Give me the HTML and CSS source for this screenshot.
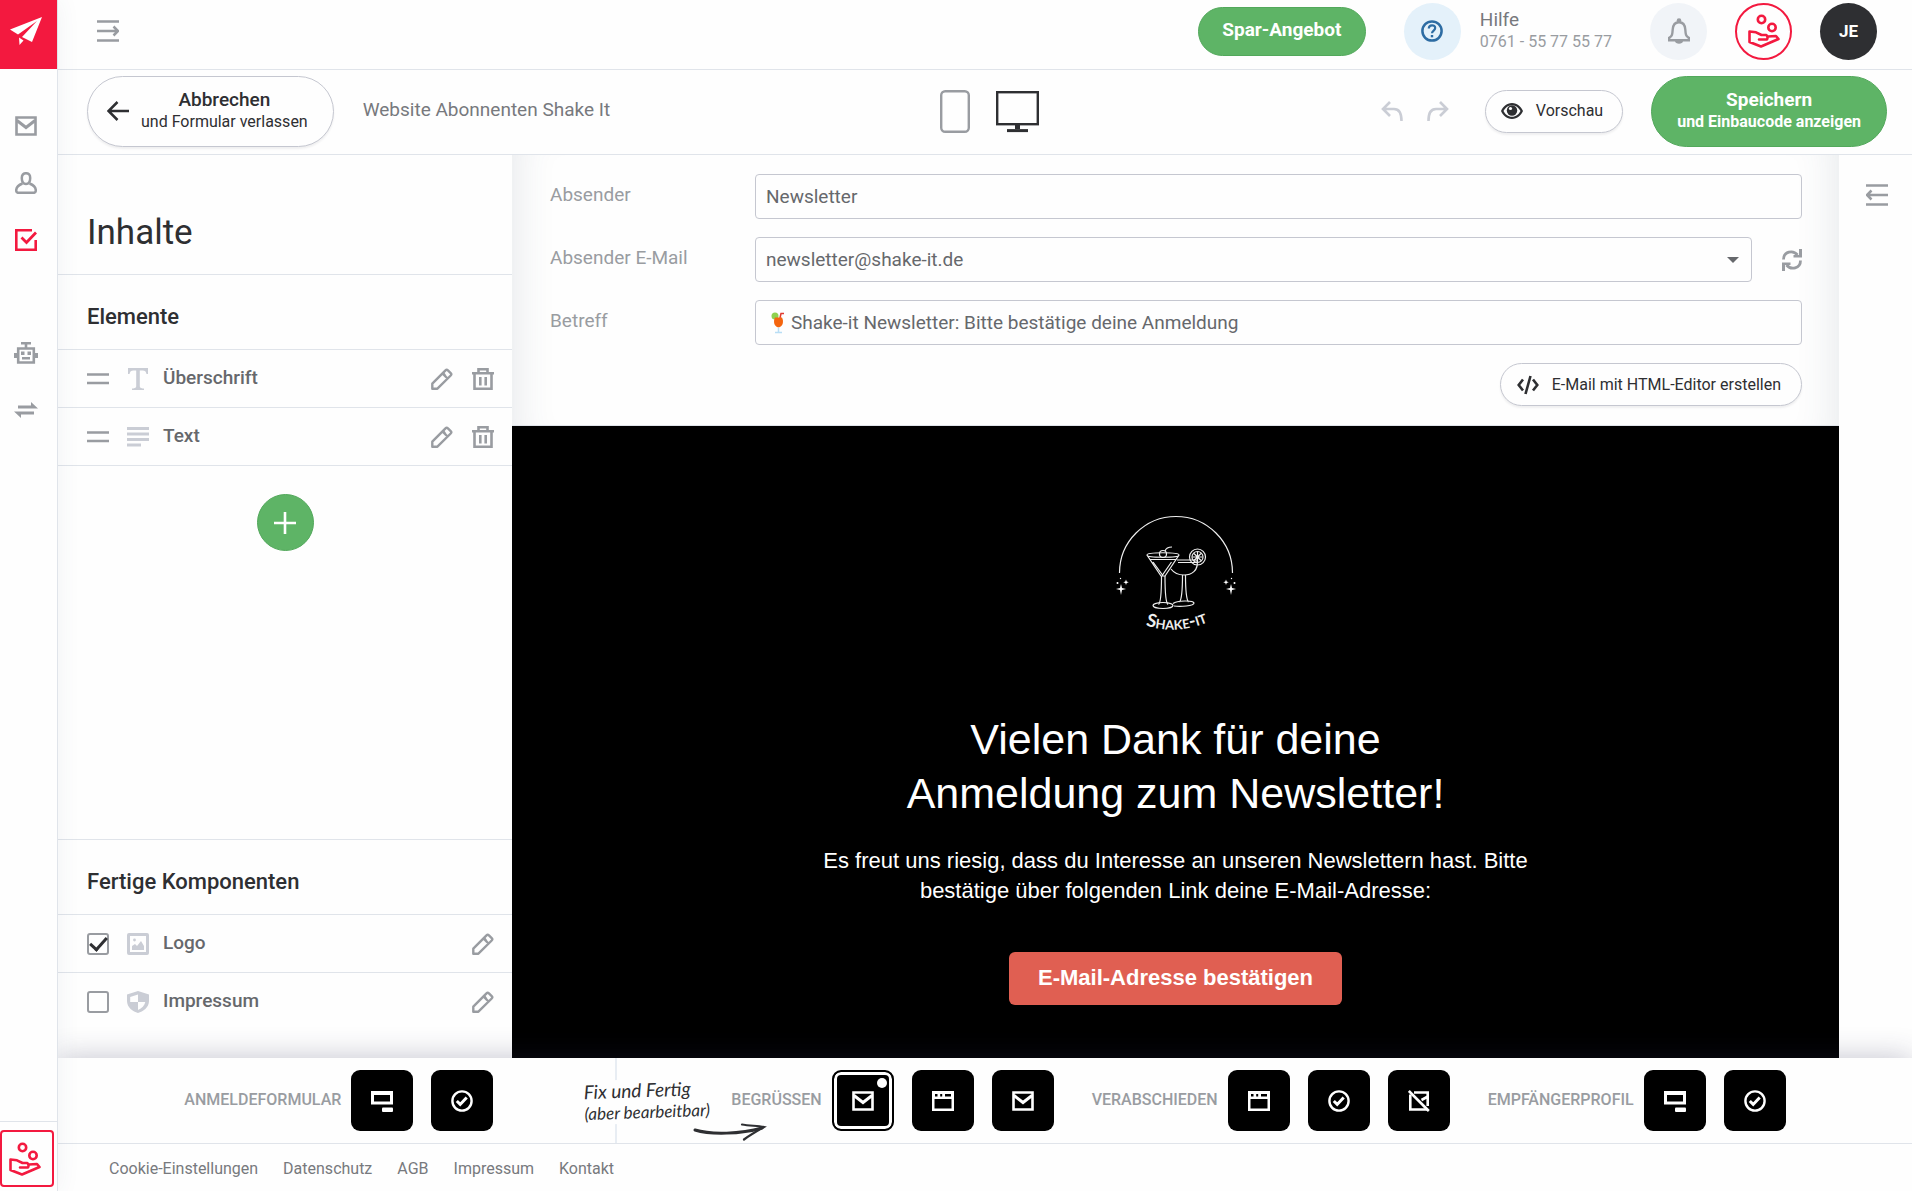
FILE: index.html
```html
<!DOCTYPE html>
<html lang="de">
<head>
<meta charset="utf-8">
<meta name="viewport" content="width=device-width, initial-scale=1">
<title>Website Abonnenten Shake It</title>
<link rel="stylesheet" href="styles.css">
</head>
<body>
<svg class="sprite" aria-hidden="true">
  <symbol id="i-mail" viewBox="0 0 22 20"><path d="M1.500 1.500h19v17h-19z" fill="none" stroke="currentColor" stroke-width="2.600"/><path d="M2 4.500l9 7 9-7" fill="none" stroke="currentColor" stroke-width="3"/></symbol>
  <symbol id="i-hand" viewBox="0 0 32 34"><g fill="none" stroke="currentColor" stroke-width="2.600" stroke-linejoin="round" stroke-linecap="round"><circle cx="13.500" cy="5.500" r="3.700"/><circle cx="24" cy="13.500" r="3.700"/><path d="M1.500 17.500v10.500l11.500 4.500 17.500-7.500-2.500-3-8 .5M1.500 17.500l6.500.8 5.500 2.700h4.500c1.500.5 2 2.500 1 4.500h-8"/></g></symbol>
  <symbol id="i-pencil" viewBox="0 0 22 22"><path d="M1.300 20.700v-5L14.500 2.300c.8-.8 1.600-.8 2.400 0l2.800 2.800c.8.800.8 1.600 0 2.400L6.400 20.700zM11.500 5.500l5 5M14.500 8.500l-2-3" fill="none" stroke="currentColor" stroke-width="2.400" stroke-linejoin="round"/></symbol>
  <symbol id="i-trash" viewBox="0 0 22 22"><path d="M0 5.200h22M6.500 5V1.300h9V5M2.500 5.500v15.200h17V5.500M8.300 9v8.500M13.700 9v8.500" fill="none" stroke="currentColor" stroke-width="2.600"/></symbol>
  <symbol id="i-drag" viewBox="0 0 22 22"><path d="M0 6.500h22M0 15h22" stroke="currentColor" stroke-width="2.600"/></symbol>
  <symbol id="i-form" viewBox="0 0 22 22"><path d="M1.500 2.500h19v10.500h-19z" fill="none" stroke="currentColor" stroke-width="3"/><path d="M0 1h22v4H0z" fill="currentColor"/><rect x="11" y="17.500" width="11" height="4.500" rx="1" fill="currentColor"/></symbol>
  <symbol id="i-check" viewBox="0 0 22 22"><g fill="none" stroke="currentColor"><circle cx="11" cy="11" r="9.600" stroke-width="2.400"/><path d="M5.800 11l3.400 3.400 6.500-7" stroke-width="3"/></g></symbol>
  <symbol id="i-page" viewBox="0 0 22 20"><path d="M0 0h22v20H0zM3 3v2.500h2.500V3zM8.200 3v2.500h2V3zM13 3v2.500h6V3zM2.500 8v9.500h17V8z" fill="currentColor" fill-rule="evenodd"/></symbol>
  <symbol id="i-nomail" viewBox="0 0 22 22"><path d="M2.300 4.500v15H19M6 2.500h13.700V16M19 7l-5.500 3" fill="none" stroke="currentColor" stroke-width="2.600"/><path d="M.8 1l20 20" stroke="currentColor" stroke-width="2.600"/></symbol>
</svg>

<div class="app">
  <nav class="rail" aria-label="Hauptnavigation">
    <a class="rail-logo" href="#" aria-label="Startseite"><svg width="34" height="30" viewBox="0 0 34 30"><path d="M33 1L23 26l-10-5L28 5 9 18.500 1 13.500z" fill="#fff"/><path d="M10 21.500l4.500 3-4 4.500z" fill="#fff"/></svg></a>
    <ul class="rail-list">
      <li><a href="#" aria-label="Mailings"><svg width="22" height="20"><use href="#i-mail"/></svg></a></li>
      <li><a href="#" aria-label="Empfänger"><svg width="22" height="22" viewBox="0 0 22 22"><g fill="none" stroke="currentColor" stroke-width="2.500"><path d="M11 1.200c-3 0-4.200 2-4.200 4.800 0 3 1.200 6 4.200 6s4.200-3 4.200-6c0-2.800-1.200-4.800-4.200-4.800z"/><path d="M7.500 11.500C3.500 13 1.200 15 1.200 18.500c0 1.500.6 2.300 2 2.300h15.600c1.400 0 2-.8 2-2.300 0-3.500-2.300-5.500-6.300-7"/></g></svg></a></li>
      <li><a class="is-active" href="#" aria-label="Formulare"><svg width="22" height="22" viewBox="0 0 22 22"><path d="M17 1.300H1.300v19.400h19.400V11" fill="none" stroke="currentColor" stroke-width="2.600"/><path d="M6.500 8.500l5 5L21 3.500" fill="none" stroke="currentColor" stroke-width="2.800"/></svg></a></li>
      <li class="rail-gap"><a href="#" aria-label="Automation"><svg width="24" height="22" viewBox="0 0 24 22"><path d="M7 1.200h10M12 1v5M4.200 6.500h15.600v14H4.200z" fill="none" stroke="currentColor" stroke-width="2.600"/><path d="M0 11h3v5H0zM21 11h3v5h-3zM7 9.500h3.500V13H7zM13.500 9.500H17V13h-3.500zM8 15h8v2.500H8z" fill="currentColor"/></svg></a></li>
      <li><a href="#" aria-label="Schnittstellen"><svg width="24" height="16" viewBox="0 0 24 16"><path d="M4 3.500h13V0l7 6.500H4zM20 12.500H7V16L0 9.500h20z" fill="currentColor"/></svg></a></li>
    </ul>
    <div class="rail-foot"><button class="rail-offer" aria-label="Angebot"><svg width="32" height="34"><use href="#i-hand"/></svg></button></div>
  </nav>

  <div class="page">
    <header class="topbar">
      <button class="plain" aria-label="Menü ausklappen"><svg width="22" height="22" viewBox="0 0 22 22"><path d="M0 1.500h22M0 11h21M0 20.500h22M16.500 6.500L21 11l-4.500 4.500" fill="none" stroke="currentColor" stroke-width="2.500"/></svg></button>
      <div class="topbar-end">
        <button class="btn-green offer">Spar-Angebot</button>
        <a class="help" href="#">
          <span class="round round-blue"><svg width="22" height="22" viewBox="0 0 22 22"><g fill="none" stroke="currentColor"><circle cx="11" cy="11" r="9.600" stroke-width="2.500"/><path d="M7.800 8.500c0-4.200 6.400-4.200 6.400-.4 0 2.400-3.200 2.500-3.200 5.200" stroke-width="2.200"/></g><rect x="9.800" y="15" width="2.400" height="2.300" fill="currentColor"/></svg></span>
          <span class="help-text"><span>Hilfe</span><small>0761 - 55 77 55 77</small></span>
        </a>
        <div class="rounds">
          <button class="round round-grey" aria-label="Benachrichtigungen"><svg width="22" height="26" viewBox="0 0 22 26"><path d="M1.200 22.200v-2.400c3-1.500 3.200-3.800 3.500-8.300C5 7 7.300 4.200 11 4.200S17 7 17.300 11.500c.3 4.500.5 6.800 3.500 8.300v2.400z" fill="none" stroke="currentColor" stroke-width="2.400"/><circle cx="11" cy="2.500" r="2.300" fill="currentColor"/><path d="M7 23h8c0 3.500-8 3.500-8 0z" fill="currentColor"/></svg></button>
          <button class="round round-red" aria-label="Angebote"><svg width="32" height="34"><use href="#i-hand"/></svg></button>
          <button class="round round-dark">JE</button>
        </div>
      </div>
    </header>

    <div class="toolbar">
      <div class="toolbar-side">
        <button class="btn-line cancel"><svg width="22" height="20" viewBox="0 0 22 20"><path d="M22 10H2M10.500 1L1.500 10l9 9" fill="none" stroke="currentColor" stroke-width="2.500"/></svg><span class="two-line"><b>Abbrechen</b><span>und Formular verlassen</span></span></button>
        <span class="form-name">Website Abonnenten Shake It</span>
      </div>
      <div class="devices">
        <button class="plain" aria-label="Mobil"><svg width="30" height="43" viewBox="0 0 30 43"><rect x="1.200" y="1.200" width="27.600" height="40.600" rx="4" fill="none" stroke="currentColor" stroke-width="2.400"/></svg></button>
        <button class="plain is-dark" aria-label="Desktop"><svg width="43" height="43" viewBox="0 0 43 43"><rect x="1.200" y="2.200" width="40.600" height="32" fill="none" stroke="currentColor" stroke-width="2.400"/><path d="M19 34h5v5h-5z" fill="currentColor"/><path d="M11 40.600h21" stroke="currentColor" stroke-width="3"/></svg></button>
      </div>
      <div class="toolbar-side toolbar-end">
        <div class="history">
          <button class="plain" aria-label="Rückgängig"><svg width="22" height="20" viewBox="0 0 22 20"><path d="M9 1L2 8l7 7M2.500 8H13c5 0 7.500 3.500 7.500 12" fill="none" stroke="currentColor" stroke-width="2.600"/></svg></button>
          <button class="plain" aria-label="Wiederholen"><svg width="22" height="20" viewBox="0 0 22 20"><path d="M13 1l7 7-7 7M19.500 8H9c-5 0-7.500 3.500-7.500 12" fill="none" stroke="currentColor" stroke-width="2.600"/></svg></button>
        </div>
        <button class="btn-line preview-btn"><svg width="22" height="16" viewBox="0 0 22 16"><path d="M11 0C5.500 0 1.800 4 0 8c1.800 4 5.500 8 11 8s9.200-4 11-8c-1.800-4-5.500-8-11-8zm0 13.800C7 13.800 4 11 2.500 8 4 5 7 2.200 11 2.200S18 5 19.500 8C18 11 15 13.800 11 13.800z" fill="currentColor"/><circle cx="11" cy="7.500" r="5.200" fill="currentColor"/><circle cx="9.500" cy="5.500" r="1.600" fill="#fff"/></svg>Vorschau</button>
        <button class="btn-green save"><span class="two-line"><b>Speichern</b><span>und Einbaucode anzeigen</span></span></button>
      </div>
    </div>

    <div class="editor">
      <aside class="panel">
        <h1>Inhalte</h1>
        <h2>Elemente</h2>
        <ul class="rows">
          <li><svg class="grey" width="22" height="22"><use href="#i-drag"/></svg><svg class="pale" width="22" height="22" viewBox="0 0 22 22"><path d="M1 0h20v6h-1.500c-.5-2.500-1.500-3.500-4-3.500h-2.700V18c0 1.800.8 2.200 4.200 2.500V22H5v-1.500c3.400-.3 4.200-.7 4.200-2.500V2.500H6.500c-2.500 0-3.500 1-4 3.500H1z" fill="currentColor"/></svg><span class="row-name">Überschrift</span><button class="plain" aria-label="Überschrift bearbeiten"><svg width="22" height="22"><use href="#i-pencil"/></svg></button><button class="plain" aria-label="Überschrift löschen"><svg width="22" height="22"><use href="#i-trash"/></svg></button></li>
          <li><svg class="grey" width="22" height="22"><use href="#i-drag"/></svg><svg class="pale" width="22" height="22" viewBox="0 0 22 22"><path d="M0 2.500h22M0 8h22M0 13.500h22M0 19h14" stroke="currentColor" stroke-width="2.800"/></svg><span class="row-name">Text</span><button class="plain" aria-label="Text bearbeiten"><svg width="22" height="22"><use href="#i-pencil"/></svg></button><button class="plain" aria-label="Text löschen"><svg width="22" height="22"><use href="#i-trash"/></svg></button></li>
        </ul>
        <button class="add btn-green" aria-label="Element hinzufügen"><svg width="22" height="22" viewBox="0 0 22 22"><path d="M11 0v22M0 11h22" stroke="currentColor" stroke-width="2.600"/></svg></button>
        <h2 class="h2-bottom">Fertige Komponenten</h2>
        <ul class="rows rows-last">
          <li><input type="checkbox" id="c-logo" checked><svg class="pale" width="22" height="22" viewBox="0 0 22 22"><path d="M2 0h18a2 2 0 012 2v18a2 2 0 01-2 2H2a2 2 0 01-2-2V2a2 2 0 012-2zm1 3v16h16V3z" fill="currentColor" fill-rule="evenodd"/><path d="M5 17v-4l3-2 2 2 4-5 3 5v4z" fill="currentColor"/><circle cx="7.500" cy="7" r="1.400" fill="currentColor"/></svg><label class="row-name" for="c-logo">Logo</label><button class="plain" aria-label="Logo bearbeiten"><svg width="22" height="22"><use href="#i-pencil"/></svg></button></li>
          <li><input type="checkbox" id="c-imp"><svg class="pale" width="22" height="22" viewBox="0 0 22 22"><path d="M11 0l11 3.500V10c0 6.500-6 10.500-11 12C6 20.500 0 16.500 0 10V3.500zm0 3.500L3.200 6v5H11zm0 7.500v8c4-1.500 6.500-4.500 7.300-8z" fill="currentColor" fill-rule="evenodd"/></svg><label class="row-name" for="c-imp">Impressum</label><button class="plain" aria-label="Impressum bearbeiten"><svg width="22" height="22"><use href="#i-pencil"/></svg></button></li>
        </ul>
      </aside>

      <main class="stage">
        <form class="mail-form">
          <div class="line"><label for="f-from">Absender</label><div class="field"><input id="f-from" type="text" value="Newsletter"></div></div>
          <div class="line"><label for="f-mail">Absender E-Mail</label><div class="field"><select id="f-mail"><option>newsletter@shake-it.de</option></select><svg class="caret" width="12" height="6" viewBox="0 0 12 6"><path d="M0 0h12L6 6z" fill="currentColor"/></svg></div><button type="button" class="plain refresh" aria-label="Aktualisieren"><svg width="20" height="22" viewBox="0 0 20 22"><path d="M1.500 10.500C1.500 2.500 11 .5 15.500 6M18.500 11.500c0 8-9.500 10-14 4.500" fill="none" stroke="currentColor" stroke-width="2.800"/><path d="M20 0v8.500h-8.500V6H17V0zM0 22v-8.500h8.500V16H3v6z" fill="currentColor"/></svg></button></div>
          <div class="line"><label for="f-subject">Betreff</label><div class="field"><svg class="drink" width="14" height="22" viewBox="0 0 14 22"><circle cx="4" cy="4" r="3.500" fill="#8fd14f"/><path d="M9 6l1-4.500h3" fill="none" stroke="#e03a2f" stroke-width="1.500"/><path d="M4 5.500h7c2 4 1 9-3.500 10C3 14.500 2 9.500 4 5.500z" fill="#f4650f"/><path d="M7.500 15.500V20M4 20.500h7" stroke="#b9def5" stroke-width="1.500"/></svg><input id="f-subject" type="text" value="Shake-it Newsletter: Bitte bestätige deine Anmeldung"></div></div>
          <button type="button" class="btn-line html-btn"><svg width="22" height="20" viewBox="0 0 22 20"><path d="M6 4.500L1.700 10 6 15.500M16 4.500l4.300 5.500L16 15.500M13.500 1l-5 18" fill="none" stroke="currentColor" stroke-width="2.600"/></svg>E-Mail mit HTML-Editor erstellen</button>
        </form>

        <article class="mail">
          <svg class="brand" width="120" height="122" viewBox="0 0 120 122" role="img" aria-label="Shake-it">
            <path id="smile" d="M20 107 Q60 124 101 103" fill="none"/>
            <g fill="none" stroke="#eee" stroke-width="1.200">
              <path d="M3.500 58a56.500 56.500 0 01113 0"/>
              <path d="M31 40c0-3 32-3 32 0L49 61H45zM31 40c0 3 32 3 32 0M34 44.500h26M37 47l9.500 13 9-13"/>
              <circle cx="47" cy="39" r="3.500"/><path d="M49 36c1-3 4-4 7-4"/>
              <path d="M45.500 61c0 15-1 27-3 28.500M49 61c0 15 1 27 3 28.500"/><ellipse cx="47" cy="90.500" rx="10" ry="3"/>
              <path d="M61 45h20c2 11-6 15-13 15-6 0-10-2-13-6M62 47.500h19"/>
              <path d="M66.500 60c0 14-.5 24-3 27M69.500 60c0 14 .5 24 3 27M57 88.500c4-3 20-3.500 21-.5 0 3-14 4-20 3"/>
              <circle cx="81.500" cy="42" r="8"/><circle cx="81.500" cy="42" r="5.500"/><path d="M81.500 37v10M76.500 42h10M78 38.500l7 7M85 38.500l-7 7"/>
            </g>
            <g fill="#fff"><path d="M5 69l1 4 4 1-4 1-1 5-1-5-4-1 4-1zM10 64.500l.7 2 2 .7-2 .7-.7 2-.7-2-2-.7 2-.7zM115 69l1 4 4 1-4 1-1 5-1-5-4-1 4-1zM110 64.500l.7 2 2 .7-2 .7-.7 2-.7-2-2-.7 2-.7z"/><circle cx="1.500" cy="68" r="1"/><circle cx="118.500" cy="68" r="1"/><circle cx="4.500" cy="63.500" r=".7"/><circle cx="115.500" cy="63.500" r=".7"/></g>
            <text class="brand-text"><textPath href="#smile" startOffset="50%" text-anchor="middle">Shake-it</textPath></text>
          </svg>
          <h3>Vielen Dank für deine<br>Anmeldung zum Newsletter!</h3>
          <p>Es freut uns riesig, dass du Interesse an unseren Newslettern hast. Bitte bestätige über folgenden Link deine E-Mail-Adresse:</p>
          <a class="confirm" href="#">E-Mail-Adresse bestätigen</a>
        </article>
      </main>

      <aside class="side-right"><button class="plain" aria-label="Seitenleiste ausklappen"><svg width="22" height="22" viewBox="0 0 22 22"><path d="M0 1.500h22M1 11h21M0 20.500h22M5.500 6.500L1 11l4.500 4.500" fill="none" stroke="currentColor" stroke-width="2.500"/></svg></button></aside>
    </div>

    <nav class="steps" aria-label="Seiten">
      <div class="step-group"><span>Anmeldeformular</span><div class="tiles"><button aria-label="Formular"><svg width="22" height="22"><use href="#i-form"/></svg></button><button aria-label="Bestätigung"><svg width="22" height="22"><use href="#i-check"/></svg></button></div></div>
      <div class="note"><div class="note-text"><span>Fix und Fertig</span><small>(aber bearbeitbar)</small></div><svg class="note-arrow" width="74" height="18" viewBox="0 0 74 18"><path d="M2 7c16 5 46 4 67-2" fill="none" stroke="#2e2f32" stroke-width="3" stroke-linecap="round"/><path d="M49 1.500c8 1.500 16 1 22 2.500-7 4-14 8-20 12.500" fill="none" stroke="#2e2f32" stroke-width="2.200" stroke-linecap="round"/></svg></div>
      <div class="step-group"><span>Begrüssen</span><div class="tiles"><button class="is-current" aria-label="Bestätigungsmail"><svg width="22" height="20"><use href="#i-mail"/></svg></button><button aria-label="Bestätigungsseite"><svg width="22" height="20"><use href="#i-page"/></svg></button><button aria-label="Begrüßungsmail"><svg width="22" height="20"><use href="#i-mail"/></svg></button></div></div>
      <div class="step-group"><span>Verabschieden</span><div class="tiles"><button aria-label="Abmeldeseite"><svg width="22" height="20"><use href="#i-page"/></svg></button><button aria-label="Abmeldung bestätigt"><svg width="22" height="22"><use href="#i-check"/></svg></button><button aria-label="Keine Mail"><svg width="22" height="22"><use href="#i-nomail"/></svg></button></div></div>
      <div class="step-group"><span>Empfängerprofil</span><div class="tiles"><button aria-label="Profilformular"><svg width="22" height="22"><use href="#i-form"/></svg></button><button aria-label="Profil gespeichert"><svg width="22" height="22"><use href="#i-check"/></svg></button></div></div>
    </nav>

    <footer class="foot"><a href="#">Cookie-Einstellungen</a><a href="#">Datenschutz</a><a href="#">AGB</a><a href="#">Impressum</a><a href="#">Kontakt</a></footer>
  </div>
</div>
</body>
</html>
```
FILE: styles.css
```css
:root {
  --ink: #2e2f32;
  --text: #66686c;
  --grey: #999ca1;
  --pale: #cacdd5;
  --line: #e0e4ea;
  --border: #c5c7d0;
  --green: #5eb466;
  --red: #f3193f;
  --bg: #fefefe;
}
* { box-sizing: border-box; }
body {
  margin: 0;
  background: var(--bg);
  color: var(--text);
  font: 400 19px/24px Roboto, "Liberation Sans", sans-serif;
}
button, input, select { font: inherit; color: inherit; margin: 0; }
button { cursor: pointer; padding: 0; }
a { color: inherit; text-decoration: none; }
ul { list-style: none; margin: 0; padding: 0; }
svg { display: block; flex: none; }
.sprite { display: none; }
.plain { border: 0; background: none; color: var(--grey); flex: none; }

.app { display: flex; min-height: 100vh; }

/* icon rail */
.rail {
  flex: none;
  width: 58px;
  display: flex;
  flex-direction: column;
  border-right: 1px solid var(--line);
  box-shadow: 0 0 24px rgba(60, 80, 110, .07);
  position: relative;
  z-index: 4;
  background: var(--bg);
}
.rail-logo { height: 69px; background: var(--red); display: grid; place-items: center; padding: 0 6px 8px 0; }
.rail-list { padding-top: 28px; color: var(--grey); }
.rail-list a { width: 52px; height: 57px; display: grid; place-items: center; }
.rail-list .is-active { color: var(--red); }
.rail-gap { margin-top: 56px; }
.rail-foot { margin-top: auto; border-top: 1px solid var(--line); padding: 8px 0 4px; }
.rail-offer { width: 54px; height: 57px; border: 2px solid var(--red); border-radius: 4px; background: none; color: var(--red); display: grid; place-items: center; padding-right: 4px; }

.page { flex: 1; min-width: 0; display: flex; flex-direction: column; }

/* top bar */
.topbar { display: flex; align-items: center; justify-content: space-between; height: 70px; border-bottom: 1px solid var(--line); padding: 0 35px 7px 39px; }
.topbar-end, .help, .rounds { display: flex; align-items: center; }
.topbar-end { gap: 38px; }
.help { gap: 19px; }
.rounds { gap: 28px; }
.help-text { display: flex; flex-direction: column; line-height: 22px; color: #77797d; }
.help-text small { font-size: 16px; color: var(--grey); }
.btn-green { background: var(--green); border: 1px solid #52a85b; color: #fff; font-weight: 700; }
.offer { width: 168px; height: 49px; border-radius: 25px; padding-bottom: 2px; }
.round { width: 57px; height: 57px; border-radius: 50%; border: 0; display: grid; place-items: center; flex: none; }
.round-blue { background: #e4f1fa; color: #2d6ca3; }
.round-grey { background: #f1f4f8; color: var(--grey); }
.round-red { background: none; border: 2px solid var(--red); color: var(--red); }
.round-dark { background: var(--ink); color: #fff; font-weight: 700; font-size: 17px; }

/* tool bar */
.toolbar { display: flex; align-items: center; min-height: 85px; border-bottom: 1px solid var(--line); padding: 0 25px 2px 29px; }
.toolbar-side { flex: 1; display: flex; align-items: center; gap: 29px; }
.toolbar-end { justify-content: flex-end; gap: 28px; }
.btn-line { background: var(--bg); border: 1px solid var(--border); box-shadow: 0 2px 2px rgba(60, 60, 80, .08); color: var(--ink); display: flex; align-items: center; }
.cancel { height: 71px; border-radius: 36px; padding: 0 25px 0 19px; gap: 12px; }
.two-line { display: flex; flex-direction: column; align-items: center; line-height: 22px; font-size: 16px; }
.two-line b { font-size: 19px; font-weight: 500; }
.form-name { color: #77797d; padding-bottom: 2px; }
.devices { display: flex; gap: 26px; margin-left: 5px; }
.is-dark { color: var(--ink); }
.history { display: flex; gap: 24px; margin-right: 8px; }
.history button { color: var(--pale); }
.preview-btn { height: 43px; border-radius: 22px; padding: 0 19px 0 15px; gap: 13px; font-size: 16px; }
.save { height: 71px; border-radius: 36px; padding: 0 25px; }
.save b { font-weight: 700; }

/* editor */
.editor { flex: 1; display: flex; }
.panel { flex: none; width: 454px; display: flex; flex-direction: column; color: var(--text); }
h1, h2, h3 { margin: 0; font-weight: 400; }
h1 { font-size: 35px; line-height: 42px; color: var(--ink); padding: 57px 29px 20px; border-bottom: 1px solid var(--line); }
h2 { font-size: 22px; line-height: 30px; font-weight: 500; color: var(--ink); padding: 27px 29px 17px; border-bottom: 1px solid var(--line); }
.h2-bottom { margin-top: auto; border-top: 1px solid var(--line); }
.rows li { display: flex; align-items: center; height: 58px; padding: 0 18px 0 29px; border-bottom: 1px solid var(--line); }
.rows-last { padding-bottom: 27px; }
.rows-last li:last-child { border-bottom: 0; }
.rows .pale { margin-left: 18px; color: var(--pale); }
.grey { color: var(--grey); }
.row-name { flex: 1; margin-left: 14px; padding-bottom: 2px; font-weight: 500; }
.rows button + button { margin-left: 19px; }
.rows input {
  appearance: none;
  width: 22px;
  height: 22px;
  border: 2px solid var(--grey);
  border-radius: 3px;
  display: grid;
  place-items: center;
}
.rows input:checked::after { content: ""; width: 14px; height: 7px; border: solid var(--ink); border-width: 0 0 3px 3px; transform: rotate(-48deg); margin-bottom: 4px; }
.add { align-self: center; width: 57px; height: 57px; border-radius: 50%; margin: 28px 0; display: grid; place-items: center; }

.stage { flex: 1; min-width: 0; display: flex; flex-direction: column; }
.mail-form {
  display: flex;
  flex-direction: column;
  gap: 18px;
  padding: 19px 37px 19px 38px;
  border-bottom: 1px solid var(--line);
  box-shadow: inset 40px 0 40px -36px rgba(60, 70, 100, .12), inset -40px 0 40px -36px rgba(60, 80, 100, .12);
}
.line { display: flex; align-items: center; }
.line label { flex: none; width: 205px; padding-bottom: 4px; color: var(--grey); }
.field { flex: 1; height: 45px; display: flex; align-items: center; border: 1px solid var(--border); border-radius: 4px; background: none; padding: 0 10px; }
.field input, .field select { flex: 1; min-width: 0; height: 43px; border: 0; padding: 0; background: none; appearance: none; outline: 0; }
.caret { margin-right: 2px; color: var(--text); }
.drink { margin: 0 6px 0 5px; }
.refresh { margin-left: 30px; }
.html-btn { align-self: flex-end; height: 43px; border-radius: 22px; padding: 0 20px 0 16px; gap: 13px; font-size: 16px; }

.mail { flex: 1; display: flex; flex-direction: column; align-items: center; padding: 89px 24px 52px; background: #000; color: #fff; text-align: center; font-family: "Liberation Sans", Arial, sans-serif; }
.brand-text { font: small-caps 700 18px Lato, sans-serif; fill: #eee; }
.mail h3 { margin-top: 75px; font-size: 43px; line-height: 54px; }
.mail p { max-width: 730px; margin: 26px 0 46px; font-size: 22px; line-height: 30px; }
.confirm { background: #e05f52; border-radius: 6px; padding: 11px 29px 12px; font-weight: 700; font-size: 22px; line-height: 30px; }

.side-right { flex: none; width: 73px; display: flex; justify-content: center; align-items: flex-start; padding: 29px 0 0 2px; }

/* step bar */
.steps { position: relative; z-index: 3; display: flex; justify-content: center; align-items: center; gap: 38px; height: 86px; background: var(--bg); border-bottom: 1px solid var(--line); box-shadow: 0 0 30px rgba(40, 40, 80, .28); clip-path: inset(-40px 0 0 0); }
.step-group { display: flex; align-items: center; gap: 10px; font-size: 16px; font-weight: 500; text-transform: uppercase; color: var(--grey); }
.step-group > span { padding-bottom: 2px; }
.tiles { display: flex; gap: 18px; }
.tiles button { width: 62px; height: 61px; border: 0; border-radius: 9px; background: #000; color: #fff; display: grid; place-items: center; position: relative; }
.tiles .is-current { border: 2px solid #000; box-shadow: inset 0 0 0 3px #fff; }
.is-current::after { content: ""; position: absolute; top: 6px; right: 5px; width: 10px; height: 10px; border-radius: 50%; background: #fff; }
.note { position: relative; align-self: stretch; width: 162px; display: flex; align-items: center; padding-left: 53px; background: linear-gradient(#e8edf3, #e8edf3) 84px 0 / 2px 100% no-repeat; }
.note-text { flex: none; display: flex; flex-direction: column; background: var(--bg); color: var(--ink); font: italic 400 19px/22px Lato, cursive; transform: rotate(-2deg); }
.note-text small { font-size: 17px; }
.note-arrow { position: absolute; right: -74px; bottom: 2px; }

.foot { display: flex; gap: 25px; padding: 13px 51px 10px; font-size: 16px; line-height: 24px; color: #77797d; }
```
